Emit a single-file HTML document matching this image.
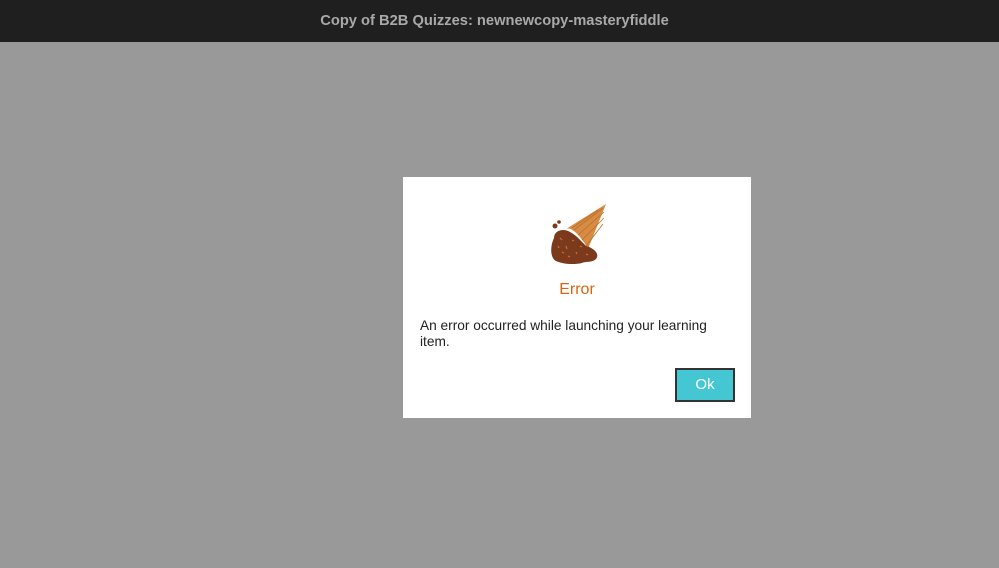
<!DOCTYPE html>
<html><head><meta charset="utf-8"><style>
html,body{margin:0;padding:0;width:999px;height:568px;overflow:hidden;background:#999;font-family:"Liberation Sans",Arial,sans-serif}
.hdr{position:absolute;left:0;top:0;width:989px;padding-right:10px;height:42px;background:#1f1f1f;color:#a9a9a9;font-weight:bold;font-size:14.7px;text-align:center;line-height:43px}
.dlg{position:absolute;left:403px;top:177px;width:348px;height:241px;background:#fff}
.err{position:absolute;left:0;width:348px;top:104px;text-align:center;color:#d9650f;font-size:16px}
.msg{position:absolute;left:17px;top:141px;width:320px;font-size:13.7px;line-height:16px;color:#222}
.ok{position:absolute;left:272px;top:191px;width:60px;height:34px;box-sizing:border-box;border:2px solid #333;background:#45c6d3;color:#fff;font-size:15px;text-align:center;line-height:30px}
</style></head><body>
<div class="hdr">Copy of B2B Quizzes: newnewcopy-masteryfiddle</div>
<div class="dlg">
<svg style="position:absolute;left:145px;top:25px" width="60" height="65" viewBox="0 0 60 65">
<path d="M18 27 C24 24 34 36 40 47 L58 2 Z" fill="#d88c43"/>
<path d="M26 28 L55 6 M30 33 L56 10 M34 38 L56 16 M38 44 L55 22 M24 26 L50 8" stroke="#b86f2e" stroke-width="0.8"/>
<path d="M6 36 C6 28 16 26 22 30 C28 33 32 38 38 44 C46 46 52 52 48 57 C44 61 38 59 34 61 C26 63 14 62 8 59 C2 56 2 44 6 36 Z" fill="#7b3a1c"/>
<circle cx="7" cy="24" r="2.5" fill="#7b3a1c"/><circle cx="11" cy="20" r="1.8" fill="#7b3a1c"/>
<path d="M12 36 l2 2 M18 44 l1 3 M24 38 l2 1 M14 50 l2 1 M28 50 l1 2 M20 54 l2 1 M32 44 l2 1 M10 44 l1 2 M38 52 l2 1" stroke="#d66a2e" stroke-width="1.2"/>
</svg>
<div class="err">Error</div>
<div class="msg">An error occurred while launching your learning item.</div>
<div class="ok">Ok</div>
</div>
</body></html>
